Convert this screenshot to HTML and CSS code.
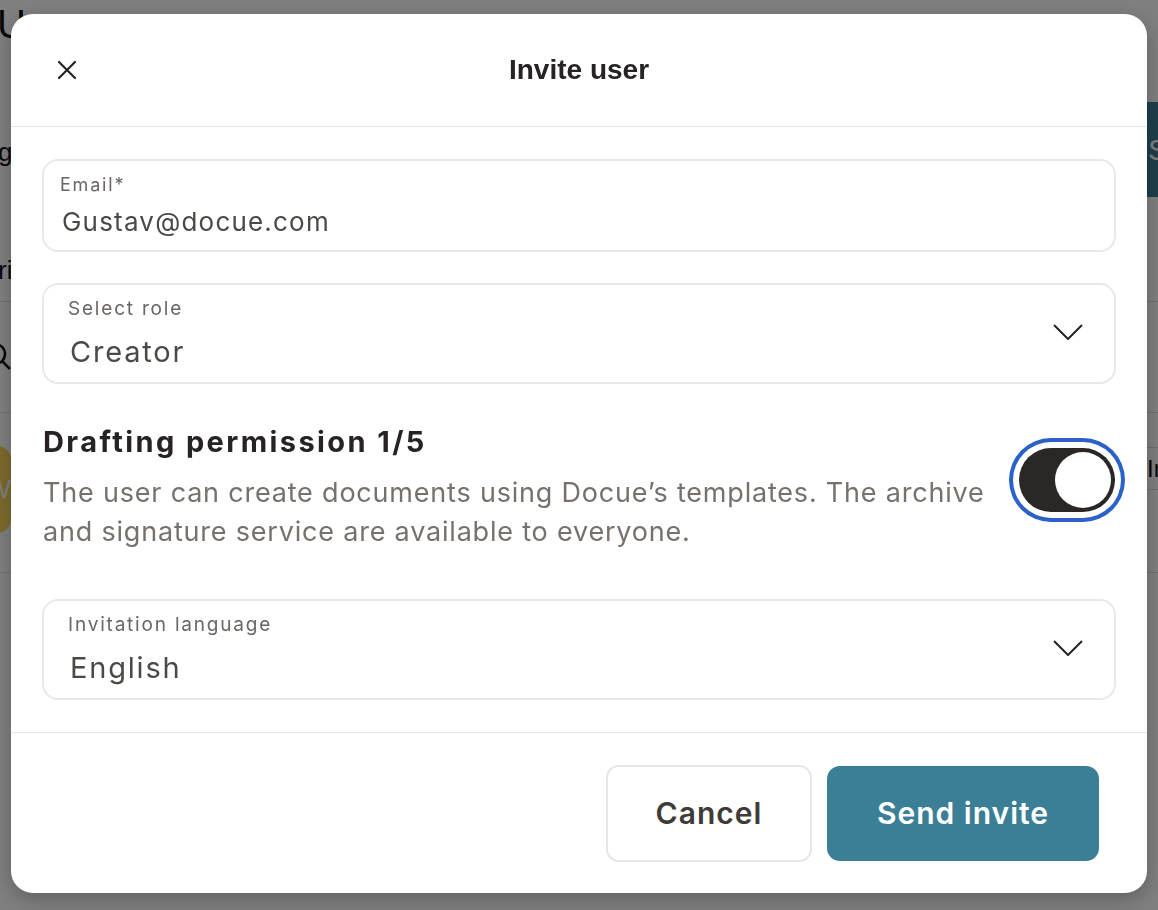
FILE: index.html
```html
<!DOCTYPE html>
<html lang="en">
<head>
    <meta charset="UTF-8">
    <meta name="viewport" content="width=device-width, initial-scale=1.0">
    <title>Invite user</title>
    <link rel="stylesheet" href="styles.css">
</head>
<body>

    <div class="page">
        <h1 class="page-title">Users</h1>
        <div class="page-bar">
            <span class="page-tab">gs</span>
            <button class="page-btn">Save</button>
        </div>
        <div class="page-row filter">
            <span class="page-text">ri</span>
        </div>
        <div class="page-row search">
            <svg width="30" height="30" viewBox="0 0 30 30" class="page-search">
                <circle cx="-2" cy="12" r="10" fill="none" stroke="#111" stroke-width="2.5"/>
                <line x1="5" y1="19" x2="13" y2="27" stroke="#111" stroke-width="2.5"/>
            </svg>
        </div>
        <div class="page-row table">
            <span class="page-avatar">W</span>
            <span class="page-cell">In</span>
        </div>
    </div>

    <div class="overlay">
        <div class="modal">
            <div class="modal-head">
                <button class="close">
                    <svg width="20" height="20" viewBox="0 0 20 20">
                        <path d="M2 2 L18 18 M18 2 L2 18" stroke="#262322" stroke-width="2.2" stroke-linecap="round"/>
                    </svg>
                </button>
                <h2 class="modal-title">Invite user</h2>
            </div>

            <div class="modal-body">
                <div class="field email">
                    <label>Email*</label>
                    <div class="value">Gustav@docue.com</div>
                </div>

                <div class="field select">
                    <div class="select-text">
                        <label>Select role</label>
                        <div class="value">Creator</div>
                    </div>
                    <svg class="chevron" width="30" height="16" viewBox="0 0 30 16">
                        <path d="M1 1 L15 15 L29 1" fill="none" stroke="#262322" stroke-width="2"/>
                    </svg>
                </div>

                <div class="permission">
                    <div class="permission-text">
                        <h3>Drafting permission 1/5</h3>
                        <p>The user can create documents using Docue’s templates. The archive and signature service are available to everyone.</p>
                    </div>
                    <div class="toggle">
                        <span class="knob"></span>
                    </div>
                </div>

                <div class="field select">
                    <div class="select-text">
                        <label>Invitation language</label>
                        <div class="value">English</div>
                    </div>
                    <svg class="chevron" width="30" height="16" viewBox="0 0 30 16">
                        <path d="M1 1 L15 15 L29 1" fill="none" stroke="#262322" stroke-width="2"/>
                    </svg>
                </div>
            </div>

            <div class="modal-foot">
                <button class="btn cancel">Cancel</button>
                <button class="btn send">Send invite</button>
            </div>
        </div>
    </div>

</body>
</html>
```

FILE: styles.css
```css
body {
    margin: 0;
    width: 1158px;
    height: 910px;
    overflow: hidden;
    background: #fff;
    font-family: 'Inter', 'Noto Sans', sans-serif;
}

/* page behind the dialog */
.page {
    font-family: 'Liberation Sans', sans-serif;
    color: #111;
    overflow: hidden;
}
.page-title {
    margin: 0 0 0 -3px;
    height: 102px;
    font-size: 40px;
    font-weight: 500;
    line-height: 48px;
}
.page-bar {
    display: flex;
    justify-content: space-between;
    align-items: center;
    height: 95px;
}
.page-tab {
    font-size: 26px;
    margin: 6px 0 0 -2px;
}
.page-btn {
    height: 95px;
    width: 60px;
    margin-right: -49px;
    border: none;
    background: #3e7e96;
    color: #fff;
    font-size: 30px;
    text-align: left;
    padding: 0 0 0 1px;
    font-family: inherit;
}
.page-row {
    border-bottom: 1px solid #dcdcdc;
    display: flex;
    justify-content: space-between;
    align-items: center;
}
.page-row.filter {
    height: 104px;
    align-items: flex-start;
}
.page-text {
    font-size: 26px;
    margin: 58px 0 0 -2px;
}
.page-row.search {
    height: 110px;
}
.page-search {
    margin: 0 0 0 -3px;
}
.page-row.table {
    height: 159px;
    align-items: flex-start;
}
.page-avatar {
    width: 90px;
    height: 87px;
    margin: 33px 0 0 -79px;
    border-radius: 14px;
    background: #f8d45a;
    color: #fff;
    text-align: right;
    font-size: 26px;
    line-height: 87px;
}
.page-cell {
    width: 20px;
    height: 41px;
    margin: 34px -9px 0 0;
    border-top: 1px solid #dcdcdc;
    border-bottom: 1px solid #dcdcdc;
    font-size: 24px;
    line-height: 41px;
}

/* dialog */
.overlay {
    position: fixed;
    inset: 0;
    background: rgba(0, 0, 0, 0.5);
    display: flex;
    justify-content: center;
    align-items: flex-start;
    padding-top: 14px;
}
.modal {
    width: 1136px;
    background: #fff;
    border-radius: 22px;
    box-shadow: 0 6px 20px rgba(0, 0, 0, 0.25);
    overflow: hidden;
}
.modal-head {
    height: 112px;
    display: flex;
    align-items: center;
    justify-content: center;
    border-bottom: 1px solid #e5e5e5;
    position: relative;
}
.close {
    position: absolute;
    left: 46px;
    top: 46px;
    width: 20px;
    height: 20px;
    padding: 0;
    border: none;
    background: none;
    display: flex;
}
.modal-title {
    margin: 0;
    font-family: 'Liberation Sans', Arial, sans-serif;
    font-size: 28px;
    font-weight: 700;
    color: #262322;
}
.modal-body {
    padding: 32px 31px;
    display: flex;
    flex-direction: column;
}
.field {
    border: 2px solid #e8e8e8;
    border-radius: 16px;
    color: #4c4845;
}
.field label {
    display: block;
    color: #6b6663;
}
.field.email {
    height: 93px;
    box-sizing: border-box;
    padding: 13px 16px 0;
    margin-bottom: 31px;
}
.field.email label {
    font-size: 18px;
    line-height: 22px;
    letter-spacing: 1.8px;
}
.field.email .value {
    margin-top: 10px;
    font-size: 26px;
    line-height: 32px;
    letter-spacing: 1.2px;
    padding-left: 2px;
}
.field.select {
    height: 101px;
    box-sizing: border-box;
    padding: 12px 31px 0 24px;
    display: flex;
    justify-content: space-between;
}
.field.select label {
    font-size: 19px;
    line-height: 24px;
    letter-spacing: 1.8px;
}
.field.select .value {
    margin-top: 13px;
    font-size: 29px;
    line-height: 36px;
    letter-spacing: 1.8px;
    padding-left: 2px;
}
.chevron {
    margin-top: 27px;
}
.permission {
    display: flex;
    justify-content: space-between;
    align-items: flex-start;
    margin: 40px 0 48px;
    padding-left: 1px;
}
.permission-text {
    width: 955px;
}
.permission h3 {
    margin: 0 0 13px;
    font-size: 29px;
    line-height: 36px;
    font-weight: 700;
    letter-spacing: 2.4px;
    color: #262322;
}
.permission p {
    margin: 0;
    font-size: 27px;
    line-height: 39px;
    letter-spacing: 0.8px;
    color: #77716d;
}
.toggle {
    width: 96px;
    height: 64px;
    box-sizing: border-box;
    padding: 4px;
    margin: 24px 1px 0 0;
    border-radius: 32px;
    background: #2a2725;
    display: flex;
    justify-content: flex-end;
    box-shadow: 0 0 0 6px #fff, 0 0 0 10px #2b61c8;
}
.knob {
    width: 56px;
    height: 56px;
    border-radius: 50%;
    background: #fff;
}
.modal-foot {
    height: 160px;
    border-top: 1px solid #e5e5e5;
    display: flex;
    justify-content: flex-end;
    align-items: center;
    gap: 15px;
    padding-right: 48px;
}
.btn {
    font-family: inherit;
    font-size: 30px;
    font-weight: 600;
    letter-spacing: 1px;
    border-radius: 13px;
    cursor: pointer;
}
.cancel {
    width: 206px;
    height: 97px;
    border: 2px solid #e6e6e6;
    background: #fff;
    color: #3f3b38;
}
.send {
    width: 272px;
    height: 95px;
    border: none;
    background: #3b7f96;
    color: #fff;
}
```
